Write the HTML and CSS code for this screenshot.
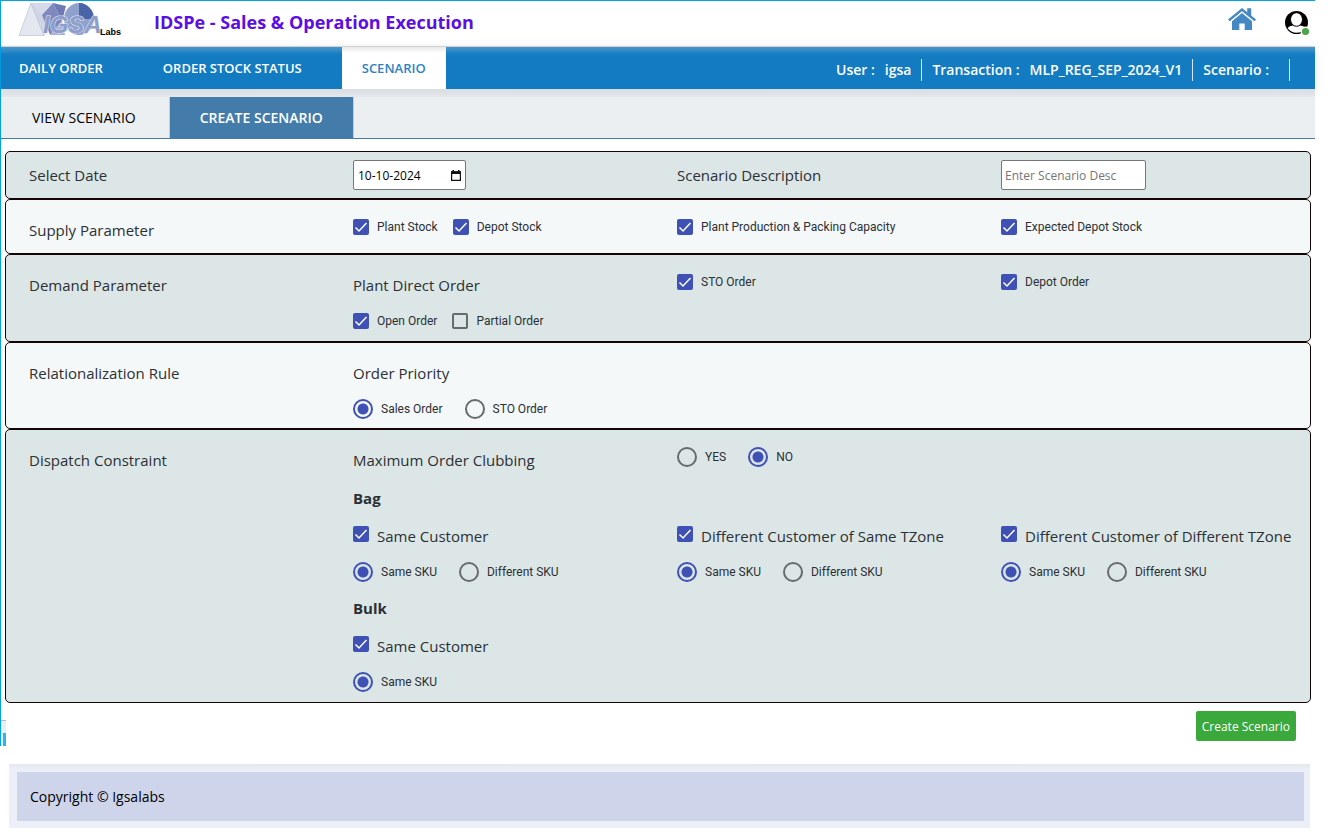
FILE: index.html
```html
<!DOCTYPE html>
<html lang="en">
<head>
<meta charset="utf-8">
<title>IDSPe - Sales &amp; Operation Execution</title>
<link rel="stylesheet" href="styles.css">
</head>
<body>
<div class="app">
  <header class="topbar">
    <svg class="logo" viewBox="0 0 102 36" role="img" aria-label="IGSA Labs">
      <path d="M12 2L0 34.500L25 34.500Z" fill="#e3e7f0" stroke="#c3c9d8" stroke-width=".8"/>
      <path d="M12 2L27 12L25 34.500Z" fill="#cfd5e4" stroke="#bcc3d6" stroke-width=".6"/>
      <path d="M12 2L34 2L23 14Z" fill="#d5daea"/>
      <path d="M34 2L23 14L31 34L43 20Z" fill="#8089bd"/>
      <path d="M34 2L43 20L47 5Z" fill="#6e79b5"/>
      <path d="M31 34L43 20L46 34Z" fill="#aab2d6"/>
      <ellipse cx="60" cy="18" rx="15" ry="16" fill="#8fa1cd"/>
      <path d="M60 2A15 16 0 0 1 75 18L60 18Z" fill="#4a64a8"/>
      <text class="logo-mark" x="24" y="32">IGSA</text>
      <text class="logo-sub" x="81" y="34">Labs</text>
    </svg>
    <h1 class="title">IDSPe - Sales &amp; Operation Execution</h1>
    <a class="home" href="#home" aria-label="Home">
      <svg width="28" height="24" viewBox="0 0 28 24" fill="#4489c4"><path d="M14 1L0 12.400L1.600 14.200L14 4.200L26.400 14.200L28 12.400L23.200 8.500L23.200 1.200L19.200 1.200L19.200 5.200Z"/><path d="M14 6L4 14.200L4 23L11.300 23L11.300 16.500L16.700 16.500L16.700 23L24 23L24 14.200Z"/></svg>
    </a>
    <button class="account" type="button" aria-label="Account">
      <svg width="26" height="26" viewBox="0 0 26 26"><circle cx="12.500" cy="12.500" r="11.500" fill="#000"/><path d="M3.500 18Q5.500 15.500 9 15.500L16 15.500Q19.500 15.500 21.500 18Q18 22.800 12.500 22.800T3.500 18Z" fill="#fff"/><ellipse cx="12.500" cy="9.500" rx="6" ry="6.800" fill="#fff" stroke="#000" stroke-width="1"/><circle cx="21.500" cy="21.500" r="5" fill="#fff"/><circle cx="21.500" cy="21.500" r="3.600" fill="#4aa546"/></svg>
    </button>
  </header>

  <nav class="mainnav">
    <a href="#daily">DAILY ORDER</a>
    <a href="#stock">ORDER STOCK STATUS</a>
    <a class="active" href="#scenario">SCENARIO</a>
    <dl class="session">
      <div><dt>User :</dt><dd>igsa</dd></div>
      <div><dt>Transaction :</dt><dd>MLP_REG_SEP_2024_V1</dd></div>
      <div><dt>Scenario :</dt><dd></dd></div>
    </dl>
  </nav>

  <nav class="subnav">
    <a href="#view">VIEW SCENARIO</a>
    <a class="active" href="#create">CREATE SCENARIO</a>
  </nav>

  <form class="form">
    <section class="panel panel-top">
      <div class="line">
        <label for="date">Select Date</label>
        <div><span class="date"><input id="date" type="text" value="10-10-2024"><button type="button" aria-label="Pick a date"><svg width="10" height="11" viewBox="0 0 10 11"><path d="M.6 2H9.400V10.300H.6Z" fill="none" stroke="#111" stroke-width="1.200"/><path d="M0 1.200H10V4H0ZM1.500 0H3V2H1.500ZM7 0H8.500V2H7Z" fill="#111"/></svg></button></span></div>
        <label for="desc">Scenario Description</label>
        <div><input class="desc" id="desc" type="text" placeholder="Enter Scenario Desc"></div>
      </div>
    </section>

    <section class="panel panel-supply">
      <div class="line">
        <h2>Supply Parameter</h2>
        <div class="checks raised">
          <label><input type="checkbox" checked>Plant Stock</label>
          <label><input type="checkbox" checked>Depot Stock</label>
        </div>
        <div class="checks raised"><label><input type="checkbox" checked>Plant Production &amp; Packing Capacity</label></div>
        <div class="checks raised"><label><input type="checkbox" checked>Expected Depot Stock</label></div>
      </div>
    </section>

    <section class="panel">
      <div class="line">
        <h2>Demand Parameter</h2>
        <h3>Plant Direct Order</h3>
        <div class="checks raised"><label><input type="checkbox" checked>STO Order</label></div>
        <div class="checks raised"><label><input type="checkbox" checked>Depot Order</label></div>
      </div>
      <div class="line line-options">
        <div class="checks second">
          <label><input type="checkbox" checked>Open Order</label>
          <label><input type="checkbox">Partial Order</label>
        </div>
      </div>
    </section>

    <section class="panel panel-rule">
      <div class="line">
        <h2>Relationalization Rule</h2>
        <h3>Order Priority</h3>
      </div>
      <div class="line line-options">
        <div class="radios second">
          <label><input type="radio" name="priority" checked>Sales Order</label>
          <label><input type="radio" name="priority">STO Order</label>
        </div>
      </div>
    </section>

    <section class="panel">
      <div class="line">
        <h2>Dispatch Constraint</h2>
        <h3>Maximum Order Clubbing</h3>
        <div class="radios raised">
          <label><input type="radio" name="clubbing">YES</label>
          <label><input type="radio" name="clubbing" checked>NO</label>
        </div>
      </div>
      <div class="line"><h3 class="second strong">Bag</h3></div>
      <div class="line">
        <div class="checks large second"><label><input type="checkbox" checked>Same Customer</label></div>
        <div class="checks large"><label><input type="checkbox" checked>Different Customer of Same TZone</label></div>
        <div class="checks large"><label><input type="checkbox" checked>Different Customer of Different TZone</label></div>
      </div>
      <div class="line line-options">
        <div class="radios second">
          <label><input type="radio" name="bag-same" checked>Same SKU</label>
          <label><input type="radio" name="bag-same">Different SKU</label>
        </div>
        <div class="radios">
          <label><input type="radio" name="bag-zone" checked>Same SKU</label>
          <label><input type="radio" name="bag-zone">Different SKU</label>
        </div>
        <div class="radios">
          <label><input type="radio" name="bag-diff" checked>Same SKU</label>
          <label><input type="radio" name="bag-diff">Different SKU</label>
        </div>
      </div>
      <div class="line"><h3 class="second strong">Bulk</h3></div>
      <div class="line">
        <div class="checks large second"><label><input type="checkbox" checked>Same Customer</label></div>
      </div>
      <div class="line line-options">
        <div class="radios second"><label><input type="radio" name="bulk-same" checked>Same SKU</label></div>
      </div>
    </section>

    <div class="actions"><button class="submit" type="submit">Create Scenario</button></div>
  </form>
  <span class="edge"></span>
</div>

<footer class="footer"><p>Copyright © Igsalabs</p></footer>
</body>
</html>
```
FILE: styles.css
```css
* { box-sizing: border-box; }

body {
  margin: 0;
  background: #fff;
  color: #2b3034;
  font-family: "Open Sans", "Noto Sans", sans-serif;
  font-size: 15px;
}

h1, h2, h3, p, dl, dd { margin: 0; font-weight: 400; }
a { text-decoration: none; }
button, input { font-family: inherit; }

.app {
  position: relative;
  margin-right: 18px;
  border-top: 1px solid #00a2e8;
  border-left: 1px solid #00a2e8;
}

.topbar {
  display: flex;
  align-items: center;
  height: 45px;
  padding: 0 5px 0 18px;
}

.logo { width: 102px; height: 36px; align-self: flex-start; overflow: visible; }
.logo-mark { font: italic 700 24px "Liberation Sans", sans-serif; fill: #8d9ecb; stroke: #e6eaf5; stroke-width: 1px; paint-order: stroke; }
.logo-sub { font: 700 9px "Liberation Sans", sans-serif; fill: #000; }

.title {
  margin: -3px 0 0 33px;
  color: #5b0ee6;
  font-size: 18px;
  font-weight: 700;
  line-height: 24px;
}

.home { margin-left: auto; height: 34px; }
.account { margin: -2px 0 0 28px; padding: 0; border: 0; background: none; height: 26px; }

.mainnav {
  display: flex;
  height: 43px;
  border-top: 1px solid #d0d0d0;
  background: linear-gradient(#4b97cb, #137bc2 8px);
  box-shadow: 0 2px 8px rgba(0, 0, 0, .12);
}
.mainnav a {
  display: flex;
  align-items: center;
  padding: 0 18px;
  margin-right: 24px;
  color: #fff;
  font-size: 13px;
  font-weight: 600;
}
.mainnav a.active {
  padding: 0 20px;
  margin: 0 0 0 -2px;
  background: linear-gradient(#e8e8e8, #fff 6px);
  color: #2d83c5;
}

.session {
  display: flex;
  align-items: center;
  margin: 3px 25px 0 auto;
  color: #fff;
  font-size: 14px;
  font-weight: 600;
}
.session div { display: flex; gap: 10px; height: 22px; line-height: 22px; padding: 0 10px; border-right: 1px solid #d5e6f3; }
.session dd { font-weight: 600; }

.subnav {
  display: flex;
  height: 50px;
  padding-top: 8px;
  border-bottom: 1px solid #437baa;
  background: linear-gradient(#d9dde1, #e4e7eb 8px, #ebeff2 8px);
}
.subnav a {
  display: flex;
  align-items: center;
  padding: 0 33px 0 31px;
  border-right: 1px solid #c3cdd6;
  color: #000;
  font-size: 14px;
  font-weight: 500;
}
.subnav a.active { padding: 0 30px; background: #437baa; color: #fff; font-weight: 600; }

.form { padding: 12px 4px 5px; }

.panel {
  padding: 11px 0 3px 8px;
  border: 1px solid #140506;
  border-radius: 5px;
  background: #dde6e6;
}
.panel:nth-of-type(even) { background: #f4f8f9; }
.panel-top { padding-top: 4px; padding-bottom: 4px; }
.panel-supply { padding-bottom: 4px; }
.panel-rule { padding-bottom: 2px; }

.line {
  display: grid;
  grid-template-columns: repeat(4, 1fr);
  align-items: center;
  height: 38px;
}
.line > * { padding-left: 15px; white-space: nowrap; }
.line-options { height: 34px; }
.line .second { grid-column: 2; }
.line .raised { padding-bottom: 6px; }
.line h2, .line h3 { font-size: 15px; }
.line .strong { font-weight: 700; }

.checks, .radios {
  display: flex;
  gap: 15px;
  font-family: Roboto, sans-serif;
  font-size: 12px;
}
.radios { gap: 22px; }
.checks label, .radios label { display: flex; align-items: center; gap: 8px; }
.large { font-family: inherit; font-size: 15px; }

input[type="checkbox"], input[type="radio"] {
  appearance: none;
  flex: none;
  margin: 0;
  border: 2px solid #666b6c;
}
input[type="checkbox"] { width: 16px; height: 16px; border-radius: 2px; }
.large input[type="checkbox"] { margin-bottom: 4px; }
input[type="checkbox"]:checked {
  border: 0;
  background: #3f51b5 url("data:image/svg+xml,%3Csvg xmlns='http://www.w3.org/2000/svg' viewBox='0 0 16 16'%3E%3Cpath d='M2.500 8.500L6 12L13.500 4' fill='none' stroke='white' stroke-width='1.500'/%3E%3C/svg%3E") center / 16px 16px no-repeat;
}
input[type="radio"] { width: 20px; height: 20px; border-radius: 50%; }
input[type="radio"]:checked {
  border-color: #3f51b5;
  background: radial-gradient(#3f51b5 5px, transparent 6px);
}

.date {
  display: flex;
  align-items: center;
  width: 113px;
  height: 30px;
  padding: 0 4px;
  border: 1px solid #767676;
  border-radius: 2px;
  background: #fff;
}
.date input { flex: 1; min-width: 0; padding: 0; border: 0; color: #000; font-size: 12px; }
.date button { display: flex; padding: 0; border: 0; background: none; }

.desc {
  display: block;
  width: 145px;
  height: 30px;
  padding: 0 3px;
  border: 1px solid #767676;
  border-radius: 2px;
  font-size: 12px;
}
.desc::placeholder { color: #757575; }

.actions { display: flex; justify-content: flex-end; padding: 8px 15px 0 0; }
.submit {
  height: 30px;
  padding: 0 6px;
  border: 0;
  border-radius: 2px;
  background: #3aa83a;
  color: #fff;
  font-size: 12px;
}

.edge {
  position: absolute;
  left: 0;
  bottom: 0;
  width: 5px;
  height: 26px;
  border-top: 1px solid #b5bcc4;
  background: linear-gradient(#2bb3f3, #2bb3f3) 2px 12px / 3px 13px no-repeat #e8eef6;
}

.footer {
  margin: 18px 23px 0 9px;
  padding: 8px 6px 7px 8px;
  background: linear-gradient(#e4e8ee, #eceff8 6px);
}
.footer p {
  padding: 13px;
  background: #ced4ea;
  color: #000;
  font-size: 14px;
  font-weight: 500;
  line-height: 23px;
}
```
